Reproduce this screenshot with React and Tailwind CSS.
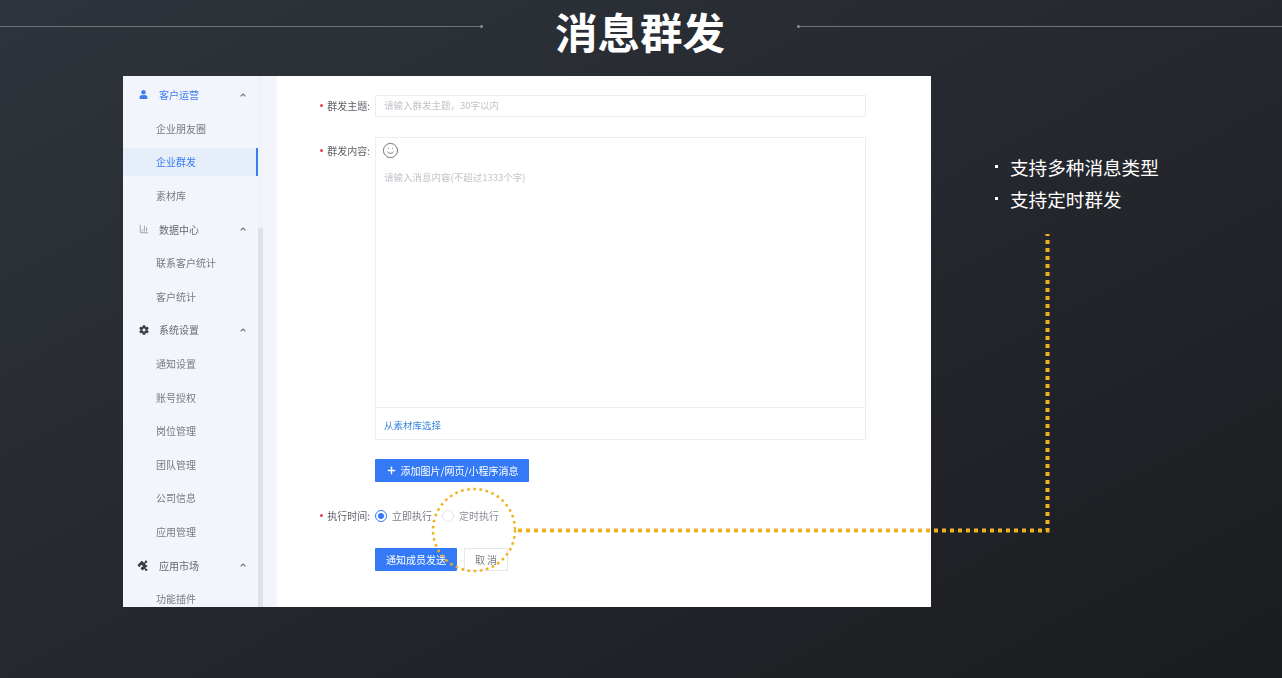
import { ChartColumn, ChevronUp, Plus, Smile } from 'lucide-react'
import { FaCog, FaPuzzlePiece, FaUser } from 'react-icons/fa'

const cjk = { fontFamily: '"Noto Sans CJK SC", "Noto Sans", sans-serif' }

const menu = [
  { label: '客户运营', icon: FaUser, size: 9, group: true, blue: true },
  { label: '企业朋友圈' },
  { label: '企业群发', active: true },
  { label: '素材库' },
  { label: '数据中心', icon: ChartColumn, size: 10, group: true, thin: true },
  { label: '联系客户统计' },
  { label: '客户统计' },
  { label: '系统设置', icon: FaCog, size: 10, group: true },
  { label: '通知设置' },
  { label: '账号授权' },
  { label: '岗位管理' },
  { label: '团队管理' },
  { label: '公司信息' },
  { label: '应用管理' },
  { label: '应用市场', icon: FaPuzzlePiece, size: 11, group: true, tilt: true },
  { label: '功能插件' },
]

function MenuRow({ item }) {
  const Icon = item.icon
  if (item.group) {
    return (
      <div className={`h-[33.6px] shrink-0 flex items-center pl-[16px] pr-[11px] text-[10px] ${item.blue ? 'text-[#3b7cf0]' : 'text-[#666a70]'}`}>
        <span className="w-[20px] flex">
          <Icon
            size={item.size}
            strokeWidth={1.3}
            className={`${item.tilt ? 'rotate-45' : ''} ${item.thin ? 'text-[#5f6369]' : item.blue ? 'text-[#3b7cf0]' : 'text-[#3a3d42]'}`}
          />
        </span>
        <span className="flex-1">{item.label}</span>
        <ChevronUp size={8} strokeWidth={3.5} className="text-[#777b82]" />
      </div>
    )
  }
  return (
    <div className={`h-[33.6px] shrink-0 flex items-center text-[10px] ${item.active ? 'text-[#3b7cf0]' : 'text-[#777b82]'}`}>
      <div className={`flex items-center h-[28px] pl-[33px] w-full ${item.active ? 'bg-[#e6eefa] border-r-2 border-[#3b7cf0]' : ''}`}>
        {item.label}
      </div>
    </div>
  )
}

function Sidebar() {
  return (
    <aside className="w-[154px] shrink-0 flex bg-[#f2f5fb] overflow-hidden">
      <div className="w-[135px] shrink-0 pt-[2px] flex flex-col">
        {menu.map(item => (
          <MenuRow key={item.label} item={item} />
        ))}
      </div>
      <div className="w-[5px] shrink-0 flex flex-col bg-[#f0f2f6]">
        <div className="h-[152px]" />
        <div className="flex-1 bg-[#dfe1e5]" />
      </div>
    </aside>
  )
}

function Label({ children }) {
  return (
    <div className="w-[98px] shrink-0 flex items-center justify-end pr-[5px] pb-px text-[10px] text-[#5f6369]">
      <span className="w-[3px] h-[3px] rounded-full bg-[#e0404a] mr-[4px]" />
      {children}:
    </div>
  )
}

function Form() {
  return (
    <main className="flex-1 bg-white flex flex-col pt-[19px]">
      <div className="flex items-center">
        <Label>群发主题</Label>
        <div className="w-[491px] h-[22px] border border-[#eceef1] flex items-center pl-2 pb-px text-[9.5px] text-[#c0c3c8]">
          请输入群发主题，30字以内
        </div>
      </div>

      <div className="flex items-start mt-5">
        <div className="pt-[6px]">
          <Label>群发内容</Label>
        </div>
        <div className="w-[491px] h-[303px] border border-[#eceef1] flex flex-col">
          <div className="flex-1 pl-[6px] pt-[4px]">
            <Smile size={17} strokeWidth={1.2} className="text-[#5c6066]" />
            <p className="mt-[11px] ml-[2px] text-[9.5px] text-[#c0c3c8]">请输入消息内容(不超过1333个字)</p>
          </div>
          <div className="h-[32px] border-t border-[#eceef1] flex items-center pl-2 pt-[3px] text-[9.5px] text-[#3b87e0]">
            从素材库选择
          </div>
        </div>
      </div>

      <div className="pl-[98px] mt-[19px]">
        <button className="w-[154px] h-[23px] bg-[#3479f6] text-white text-[10px] flex items-center justify-center gap-[4px] rounded-[1px]">
          <Plus size={11} strokeWidth={3} />
          添加图片/网页/小程序消息
        </button>
      </div>

      <div className="flex items-center mt-[23px] h-[21px]">
        <Label>执行时间</Label>
        <span className="w-[12px] h-[12px] rounded-full border border-[#3479f6] flex items-center justify-center">
          <span className="w-[6px] h-[6px] rounded-full bg-[#3479f6]" />
        </span>
        <span className="ml-[5px] text-[10px] text-[#777b82]">立即执行</span>
        <span className="ml-[10px] w-[12px] h-[12px] rounded-full border border-[#e2e5ea]" />
        <span className="ml-[5px] text-[10px] text-[#8a8e94]">定时执行</span>
      </div>

      <div className="flex pl-[98px] mt-[22px] gap-[7px]">
        <button className="w-[82px] h-[23px] bg-[#3479f6] text-white text-[10px] rounded-[1px]">通知成员发送</button>
        <button className="w-[44px] h-[23px] border border-[#e6e8eb] text-[#777b82] text-[10px]">取 消</button>
      </div>
    </main>
  )
}

export default function App() {
  return (
    <div style={cjk} className="relative w-[1282px] h-[678px] overflow-hidden bg-gradient-to-br from-[#2f343c] to-[#1b1c20]">
      <header className="h-[76px] flex items-start">
        <div className="w-[483px] mt-[25px] flex items-center">
          <div className="flex-1 h-px bg-[#6f747b]" />
          <span className="w-[3px] h-[3px] rounded-full bg-[#8a8f96]" />
        </div>
        <h1 className="w-[314px] text-center text-[42.5px] leading-[61px] font-bold text-white">消息群发</h1>
        <div className="flex-1 mt-[25px] flex items-center">
          <span className="w-[3px] h-[3px] rounded-full bg-[#8a8f96]" />
          <div className="flex-1 h-px bg-[#6f747b]" />
        </div>
      </header>

      <div className="flex pl-[123px]">
        <section className="w-[808px] h-[531px] flex blur-[0.5px]">
          <Sidebar />
          <Form />
        </section>

        <ul className="ml-[64px] pt-[78px] flex flex-col gap-[6px] text-[18.6px] leading-[26px] font-normal text-white">
          {['支持多种消息类型', '支持定时群发'].map(text => (
            <li key={text} className="flex items-center">
              <span className="w-[3px] h-[3px] bg-white mr-[12px] mb-[2px]" />
              {text}
            </li>
          ))}
        </ul>
      </div>

      {/* callout from the radio to the feature list */}
      <svg className="absolute left-0 top-0" width="1282" height="678" fill="none" stroke="#f1b11c">
        <circle cx="474" cy="530" r="41" strokeWidth="2.5" strokeDasharray="2.6 3.6" />
        <path d="M518 530.5H1047.5V234" strokeWidth="4" strokeDasharray="4 4" />
      </svg>
    </div>
  )
}
